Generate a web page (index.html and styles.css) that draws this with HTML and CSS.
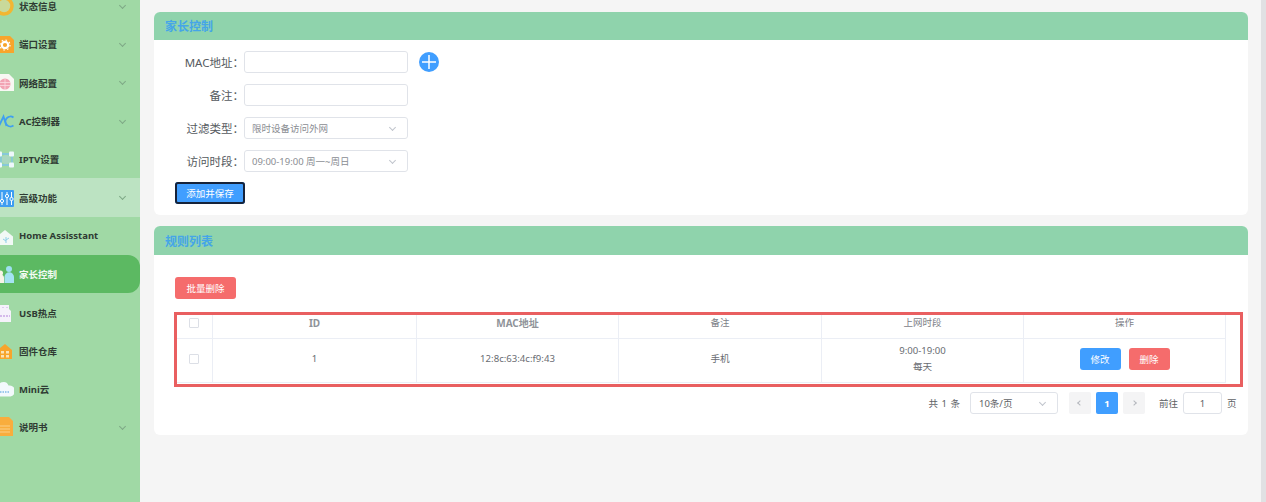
FILE: index.html
```html
<!DOCTYPE html>
<html lang="zh-CN">
<head>
<meta charset="utf-8">
<title>家长控制</title>
<link rel="stylesheet" href="styles.css">
</head>
<body>
<div class="app">
  <aside class="sidebar">
    <ul class="menu">
      <li class="item">
        <svg class="icon" viewBox="0 0 14 20"><circle cx="4" cy="10" r="8" fill="#c9d99a" stroke="#f2b632" stroke-width="3.500"/></svg>
        <span class="label">状态信息</span><span class="chev"></span>
      </li>
      <li class="item">
        <svg class="icon" viewBox="0 0 14 20"><path d="M0 2H10L14 6V19H0z" fill="#f7a52c"/><circle cx="5" cy="11" r="3.200" fill="none" stroke="#fff" stroke-width="2.200"/><circle cx="5" cy="11" r="5" fill="none" stroke="#fff" stroke-width="1.200" stroke-dasharray="1.600 2.300"/></svg>
        <span class="label">端口设置</span><span class="chev"></span>
      </li>
      <li class="item">
        <svg class="icon" viewBox="0 0 14 20"><path d="M0 1H9L14 6V18H0z" fill="#f8f8f4"/><circle cx="5" cy="11" r="5.500" fill="#f2a3b3"/><path d="M0 9.500h10M0 12.500h10M5 5.500v11" stroke="#fbdce2" stroke-width=".8"/></svg>
        <span class="label">网络配置</span><span class="chev"></span>
      </li>
      <li class="item">
        <svg class="icon" viewBox="0 0 14 20"><path d="M-1 15 3.500 5.500 6.500 15" fill="none" stroke="#3f9ff0" stroke-width="1.800"/><path d="M13.500 6.500A5 5 0 1 0 13.500 14.500" fill="none" stroke="#3f9ff0" stroke-width="1.800"/></svg>
        <span class="label">AC控制器</span><span class="chev"></span>
      </li>
      <li class="item">
        <svg class="icon" viewBox="0 0 14 20"><circle cx="6" cy="10.500" r="4.500" fill="#a9d7c0"/><path d="M1 5H12V16H1z" stroke="#7ec4ea" stroke-width="1.300" fill="none"/><rect x="-3" y="2.500" width="5" height="5" rx="1" fill="#eef8fc"/><rect x="9" y="2.500" width="5" height="5" rx="1" fill="#eef8fc"/><rect x="-3" y="13.500" width="5" height="5" rx="1" fill="#eef8fc"/><rect x="9" y="13.500" width="5" height="5" rx="1" fill="#eef8fc"/></svg>
        <span class="label">IPTV设置</span>
      </li>
      <li class="item open">
        <svg class="icon" viewBox="0 0 14 20"><rect x="-2" y="2" width="16" height="17" rx="1" fill="#3d9df2"/><path d="M2 4v13M7 4v13M11.500 4v13" stroke="#fff" stroke-width="1"/><circle cx="2" cy="13" r="1.600" fill="#3d9df2" stroke="#fff"/><circle cx="7" cy="8" r="1.600" fill="#3d9df2" stroke="#fff"/><circle cx="11.500" cy="11" r="1.600" fill="#3d9df2" stroke="#fff"/></svg>
        <span class="label">高级功能</span><span class="chev"></span>
      </li>
      <li class="item">
        <svg class="icon" viewBox="0 0 14 20"><path d="M5 4 13 10.500V19H0V8z" fill="#f2f9f6"/><path d="M6 17V11M6 14l3-2M6 15l-3-2" stroke="#8fd0e8" stroke-width="1" fill="none"/></svg>
        <span class="label">Home Assisstant</span>
      </li>
      <li class="item active">
        <svg class="icon" viewBox="0 0 14 20"><circle cx="0.500" cy="9" r="2.500" fill="#f7f3e8"/><path d="M-3 19v-5a3.500 3.500 0 0 1 7 0v5z" fill="#f7f3e8"/><circle cx="9" cy="5" r="3" fill="#9fe0f0"/><path d="M4.500 19v-6a4.700 4.700 0 0 1 9.500 0v6z" fill="#a5e3f3"/></svg>
        <span class="label">家长控制</span>
      </li>
      <li class="item">
        <svg class="icon" viewBox="0 0 14 20"><path d="M0 2H9V6L11 8V19H0z" fill="#f5f2fb"/><path d="M0 13h10" stroke="#c9a6e6" stroke-width="1.600" stroke-dasharray="2 1"/><path d="M3 4v1M7 4v1" stroke="#c9a6e6"/></svg>
        <span class="label">USB热点</span>
      </li>
      <li class="item">
        <svg class="icon" viewBox="0 0 14 20"><path d="M5 3 12 9V18H0V7z" fill="#f7a52c"/><rect x="1" y="10" width="3" height="2.500" fill="#fbe3b5"/><rect x="6" y="10" width="3" height="2.500" fill="#fbe3b5"/><rect x="1" y="14" width="3" height="2.500" fill="#fbe3b5"/><rect x="6" y="14" width="3" height="2.500" fill="#fbe3b5"/></svg>
        <span class="label">固件仓库</span>
      </li>
      <li class="item">
        <svg class="icon" viewBox="0 0 14 20"><path d="M-2 17.500a4 4 0 0 1 0-8 5.500 5.500 0 0 1 10.500-3 5.500 5.500 0 0 1 2 11z" fill="#f3f9fc"/><path d="M0 13h9" stroke="#9cc9ec" stroke-width="1.800" stroke-dasharray="1.500 1"/></svg>
        <span class="label">Mini云</span>
      </li>
      <li class="item">
        <svg class="icon" viewBox="0 0 14 20"><path d="M0 0H9L13 4V19H0z" fill="#f9ad3d"/><path d="M0 9h10M0 12h10M0 15h10" stroke="#fbd089" stroke-width="1"/></svg>
        <span class="label">说明书</span><span class="chev"></span>
      </li>
    </ul>
  </aside>

  <main class="main">
    <section class="card first">
      <h2 class="card-title">家长控制</h2>
      <div class="form">
        <div class="row">
          <label class="field-label">MAC地址：</label>
          <div class="control"></div>
          <svg class="plus" viewBox="0 0 20 20"><circle cx="10" cy="10" r="10" fill="#409eff"/><path d="M3 10h14M10 3v14" stroke="#fff" stroke-width="1.500"/></svg>
        </div>
        <div class="row">
          <label class="field-label">备注：</label>
          <div class="control"></div>
        </div>
        <div class="row">
          <label class="field-label">过滤类型：</label>
          <div class="control select"><span>限时设备访问外网</span><span class="chev light"></span></div>
        </div>
        <div class="row">
          <label class="field-label">访问时段：</label>
          <div class="control select"><span>09:00-19:00 周一~周日</span><span class="chev light"></span></div>
        </div>
        <button class="btn primary save">添加并保存</button>
      </div>
    </section>

    <section class="card">
      <h2 class="card-title tall">规则列表</h2>
      <div class="list">
        <button class="btn danger batch">批量删除</button>
        <div class="outline">
          <table class="table">
            <colgroup>
              <col class="c-check"><col class="c-id"><col class="c-mac"><col class="c-note"><col class="c-time"><col class="c-op">
            </colgroup>
            <thead>
              <tr><th><span class="check head"></span></th><th class="strong">ID</th><th class="strong">MAC地址</th><th>备注</th><th>上网时段</th><th>操作</th></tr>
            </thead>
            <tbody>
              <tr>
                <td><span class="check"></span></td>
                <td>1</td>
                <td>12:8c:63:4c:f9:43</td>
                <td>手机</td>
                <td>9:00-19:00<br>每天</td>
                <td><div class="ops"><button class="btn primary small">修改</button><button class="btn danger small">删除</button></div></td>
              </tr>
            </tbody>
          </table>
        </div>
        <div class="pager">
          <span class="total">共 1 条</span>
          <div class="control size"><span>10条/页</span><span class="chev light"></span></div>
          <span class="page-btn"><span class="arrow left"></span></span>
          <span class="page-btn current">1</span>
          <span class="page-btn"><span class="arrow right"></span></span>
          <span class="goto">前往</span>
          <div class="control jump">1</div>
          <span class="unit">页</span>
        </div>
      </div>
    </section>
  </main>
  <div class="strip"></div>
</div>
</body>
</html>
```
FILE: styles.css
```css
* { box-sizing: border-box; }
html, body { margin: 0; padding: 0; height: 100%; overflow: hidden; }
body {
  font-family: "Noto Sans", "Noto Sans CJK SC", sans-serif;
  font-size: 10px;
  color: #606266;
  background: #f5f5f5;
}
.app { display: flex; height: 502px; overflow: hidden; }

.sidebar { width: 140px; flex: none; background: #a0d9a5; overflow: hidden; }
.menu { list-style: none; margin: -13px 0 0; padding: 0; }
.item {
  height: 38.3px;
  display: flex;
  align-items: center;
  padding-right: 15px;
  color: #2f3b33;
  font-size: 9.500px;
  font-weight: 700;
}
.item.open { background: #bce3c2; }
.item.active { background: #5cb962; color: #f2fbf2; border-radius: 0 12px 12px 0; }
.icon { width: 14px; height: 20px; margin-right: 5px; flex: none; }
.label { flex: 1; white-space: nowrap; }
.chev {
  width: 5px;
  height: 5px;
  flex: none;
  border-right: 1px solid #7ea886;
  border-bottom: 1px solid #7ea886;
  transform: translateY(-1px) rotate(45deg);
}
.chev.light { border-color: #c0c4cc; }

.main { flex: 1; min-width: 0; padding: 12px 13px 0 14px; }
.strip { width: 5px; flex: none; background: #e1e1e3; }

.card { background: #fff; border-radius: 6px; overflow: hidden; }
.card.first { margin-bottom: 11px; }
.card-title {
  margin: 0;
  height: 28px;
  line-height: 30px;
  padding-left: 11px;
  background: #8fd3ac;
  color: #45a5e8;
  font-size: 12px;
  font-weight: 700;
}
.card-title.tall { height: 29px; line-height: 31px; }

.form { padding: 11px 21px; display: flex; flex-direction: column; align-items: flex-start; gap: 11px; }
.row { display: flex; align-items: center; }
.field-label { width: 69px; text-align: right; font-size: 11.500px; color: #555a60; white-space: nowrap; }
.control {
  width: 164px;
  height: 22px;
  border: 1px solid #e0e3e9;
  border-radius: 3px;
  background: #fff;
  color: #8a8d93;
  font-size: 9.500px;
  display: flex;
  align-items: center;
}
.select { justify-content: space-between; padding: 0 12px 0 7px; }
.plus { width: 20px; height: 20px; margin-left: 11px; }

.btn {
  border: 0;
  border-radius: 3px;
  color: #fff;
  font-family: inherit;
  font-size: 9.500px;
  padding: 0;
  height: 22px;
  display: block;
}
.primary { background: #409eff; }
.danger { background: #f56c6c; }
.save { width: 70px; outline: 2px solid #16233a; outline-offset: -2px; margin-top: -1px; }
.batch { width: 61px; }
.small { width: 41px; }

.list { padding: 22px 11px 21px 21px; }
.outline { margin: 13px -6px 0 -1px; border: 3px solid #e95f60; height: 75px; }
.table { width: 1048px; border-collapse: collapse; table-layout: fixed; }
.c-check { width: 35px; }
.c-id { width: 204px; }
.c-mac { width: 202px; }
.c-note { width: 203px; }
.c-time { width: 202px; }
.c-op { width: 202px; }
.table th, .table td {
  border-right: 1px solid #ebeef5;
  border-bottom: 1px solid #ebeef5;
  text-align: center;
  font-size: 9.500px;
  line-height: 16px;
}
.table th { height: 23px; padding: 0 0 0 1px; vertical-align: top; font-weight: 400; color: #7d8188; }
.table th.strong { font-size: 10px; font-weight: 700; color: #8f9399; }
.table td { height: 44px; padding: 0 0 2px 1px; color: #696c72; font-size: 9.600px; }
.check {
  display: block;
  width: 10px;
  height: 10px;
  margin: 0 0 0 11px;
  border: 1px solid #dcdfe6;
  border-radius: 1px;
}
.check.head { margin-top: 3px; }
.ops { display: flex; justify-content: center; gap: 8px; }

.pager { margin-top: 5px; display: flex; align-items: center; justify-content: flex-end; color: #606266; font-size: 9.500px; }
.total { margin-right: 10px; word-spacing: 1px; }
.control.size { width: 88px; justify-content: space-between; padding: 0 12px 0 8px; margin-right: 11px; color: #606266; }
.page-btn {
  width: 22px;
  height: 22px;
  border-radius: 2px;
  background: #f4f4f5;
  margin-right: 5px;
  display: flex;
  align-items: center;
  justify-content: center;
}
.page-btn.current { background: #409eff; color: #fff; font-weight: 700; }
.arrow { width: 4px; height: 4px; border-top: 1px solid #b4b7bd; border-left: 1px solid #b4b7bd; }
.arrow.left { transform: rotate(-45deg); }
.arrow.right { transform: rotate(135deg); }
.goto { margin-left: 9px; margin-right: 5px; }
.control.jump { width: 39px; justify-content: center; color: #606266; margin-right: 5px; }
.unit { width: 10px; }
```
